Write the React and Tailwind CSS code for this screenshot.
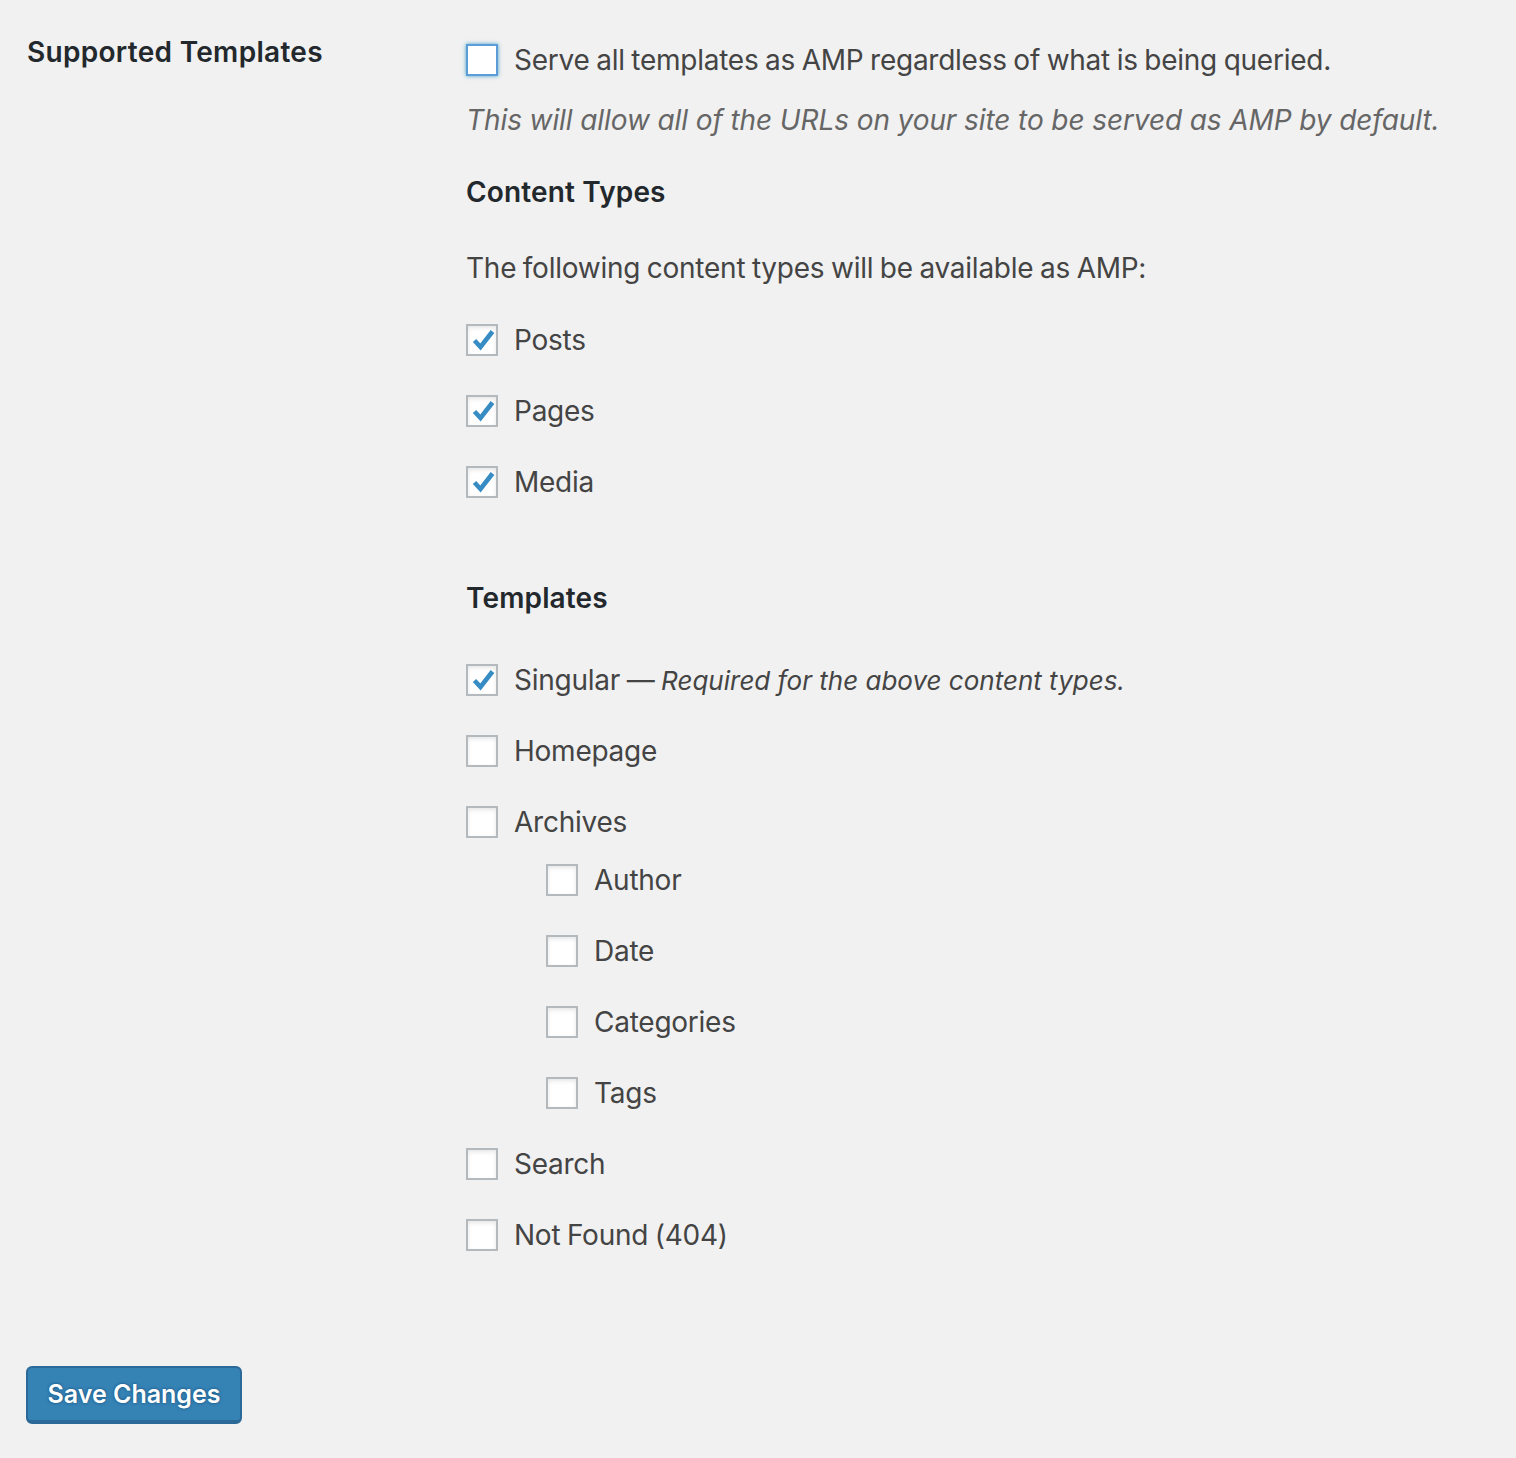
import React from 'react';

const FONT = { fontFamily: 'Inter, "Noto Sans", "Liberation Sans", sans-serif' };

const Check = () => (
  <svg viewBox="0 0 32 32" className="absolute -left-[2px] -top-[2px] h-8 w-8">
    <path d="M8.5 16.5 L14.5 23 L26.5 7.5" fill="none" stroke="#378cc4" strokeWidth="4.6" strokeLinejoin="miter" />
  </svg>
);

const Box = ({ checked, focused }) => (
  <span
    className={`relative inline-block h-8 w-8 shrink-0 bg-white ${
      focused
        ? 'border-2 border-[#5b9dd9] shadow-[0_0_4px_rgba(30,140,190,0.8)]'
        : 'border-2 border-[#b4b9be] shadow-[inset_0_2px_4px_rgba(0,0,0,0.1)]'
    }`}
  >
    {checked && <Check />}
  </span>
);

const Row = ({ checked, focused, children }) => (
  <label className="flex h-9 items-center gap-4 text-[28px] leading-9 tracking-[-0.25px] [word-spacing:-1px] text-[#444]">
    <Box checked={checked} focused={focused} />
    <span>{children}</span>
  </label>
);

const CONTENT_TYPES = ['Posts', 'Pages', 'Media'];
const ARCHIVES = ['Author', 'Date', 'Categories', 'Tags'];

export default function App() {
  return (
    <div className="min-h-[1458px] w-full bg-[#f1f1f1]" style={FONT}>
      <div className="flex pl-[27px]">
        <div className="w-[439px] shrink-0 pt-[34px]">
          <h2 className="text-[28px] font-semibold leading-9 tracking-[0.3px] text-[#23282d]">Supported Templates</h2>
        </div>

        <div className="pt-[42px]">
          <Row focused>Serve all templates as AMP regardless of what is being queried.</Row>
          <p className="mt-[24px] text-[28px] italic leading-9 tracking-[-0.1px] text-[#666]">
            This will allow all of the URLs on your site to be served as AMP by default.
          </p>

          <h3 className="mt-9 text-[28px] font-semibold leading-9 tracking-[0.15px] text-[#23282d]">Content Types</h3>
          <p className="mt-10 text-[28px] leading-9 tracking-[-0.25px] [word-spacing:-1px] text-[#444]">
            The following content types will be available as AMP:
          </p>

          <div className="mt-9 flex flex-col gap-[35px]">
            {CONTENT_TYPES.map((t) => (
              <Row key={t} checked>{t}</Row>
            ))}
          </div>

          <h3 className="mt-20 text-[28px] font-semibold leading-9 tracking-[0.15px] text-[#23282d]">Templates</h3>

          <div className="mt-[46px] flex flex-col gap-[35px]">
            <Row checked>
              Singular — <em className="text-[26px] italic tracking-normal [word-spacing:0px]">Required for the above content types.</em>
            </Row>
            <Row>Homepage</Row>
            <div>
              <Row>Archives</Row>
              <div className="mt-[22px] flex flex-col gap-[35px] pl-20">
                {ARCHIVES.map((t) => (
                  <Row key={t}>{t}</Row>
                ))}
              </div>
            </div>
            <Row>Search</Row>
            <Row>Not Found (404)</Row>
          </div>
        </div>
      </div>

      <div className="pl-[26px] pt-[113px]">
        <button
          type="button"
          className="h-[58px] w-[216px] rounded-[6px] border-2 border-[#2b6a98] border-b-[4px] bg-[#3582b5] pt-[2px] text-[25px] font-semibold text-white [text-shadow:0_0_3px_rgba(0,50,90,0.7)]"
        >
          Save Changes
        </button>
      </div>
    </div>
  );
}
